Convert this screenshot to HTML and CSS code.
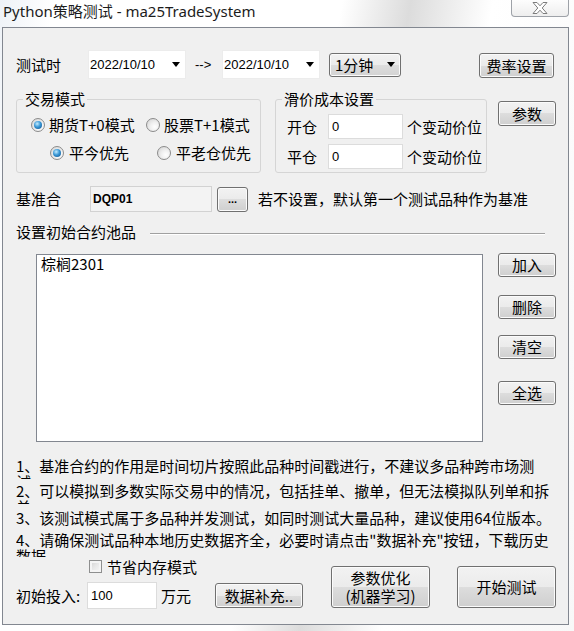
FILE: index.html
```html
<!DOCTYPE html>
<html>
<head>
<meta charset="utf-8">
<link rel="stylesheet" href="styles.css">
</head>
<body>
<div class="titlebar">
  <span class="title">Python策略测试 - ma25TradeSystem</span>
  <div class="close">
    <svg width="16" height="12" viewBox="0 0 16 12"><polygon points="1,0.5 5,0.5 8,3.8 11,0.5 15,0.5 10.2,6 15,11.5 11,11.5 8,8.2 5,11.5 1,11.5 5.8,6" fill="#ffffff" stroke="#7d7d7d" stroke-width="1" stroke-linejoin="round"/></svg>
  </div>
</div>
<div class="client">
  <div class="row r1">
    <span class="lbl l-date">测试时</span>
    <div class="date"><span>2022/10/10</span><span class="arrow"></span></div>
    <span class="to">--&gt;</span>
    <div class="date"><span>2022/10/10</span><span class="arrow"></span></div>
    <div class="combo"><span>1分钟</span><span class="arrow"></span></div>
    <button class="btn b-fee">费率设置</button>
  </div>

  <div class="row r2">
    <fieldset class="group g-mode">
      <legend>交易模式</legend>
      <div class="opt-row o1">
        <div class="opt w1"><span class="radio on"></span><span>期货T+0模式</span></div>
        <div class="opt"><span class="radio"></span><span>股票T+1模式</span></div>
      </div>
      <div class="opt-row o2">
        <div class="opt w2"><span class="radio on"></span><span>平今优先</span></div>
        <div class="opt"><span class="radio"></span><span>平老仓优先</span></div>
      </div>
    </fieldset>
    <fieldset class="group g-slip">
      <legend>滑价成本设置</legend>
      <div class="slip-row s1">
        <span class="slip-lbl">开仓</span>
        <div class="edit e-slip">0</div>
        <span class="unit">个变动价位</span>
      </div>
      <div class="slip-row s2">
        <span class="slip-lbl">平仓</span>
        <div class="edit e-slip">0</div>
        <span class="unit">个变动价位</span>
      </div>
    </fieldset>
    <button class="btn b-param">参数</button>
  </div>

  <div class="row r3">
    <span class="lbl l-base">基准合</span>
    <div class="edit e-base">DQP01</div>
    <button class="btn b-dots">...</button>
    <span class="hint">若不设置，默认第一个测试品种作为基准</span>
  </div>

  <div class="row r4">
    <span class="lbl">设置初始合约池品</span>
    <div class="sep"></div>
  </div>

  <div class="row r5">
    <div class="list"><div class="item">棕榈2301</div></div>
    <div class="btncol">
      <button class="btn b-side">加入</button>
      <button class="btn b-side m2">删除</button>
      <button class="btn b-side m3">清空</button>
      <button class="btn b-side m4">全选</button>
    </div>
  </div>

  <div class="notes">
    <div class="note n1">1、基准合约的作用是时间切片按照此品种时间戳进行，不建议多品种跨市场测试。</div>
    <div class="note n2">2、可以模拟到多数实际交易中的情况，包括挂单、撤单，但无法模拟队列单和拆单。</div>
    <div class="note n3">3、该测试模式属于多品种并发测试，如同时测试大量品种，建议使用64位版本。</div>
    <div class="note n4">4、请确保测试品种本地历史数据齐全，必要时请点击"数据补充"按钮，下载历史数据</div>
  </div>

  <div class="bottom">
    <div class="bleft">
      <div class="chk-row"><span class="chk"></span><span>节省内存模式</span></div>
      <div class="in-row">
        <span class="lbl l-init">初始投入:</span>
        <div class="edit e-init">100</div>
        <span class="wan">万元</span>
        <button class="btn b-data">数据补充..</button>
      </div>
    </div>
    <button class="btn big big1">参数优化<br>(机器学习)</button>
    <button class="btn big big2">开始测试</button>
  </div>
</div>
</body>
</html>
```

FILE: styles.css
```css
* { box-sizing: border-box; }
html, body { margin: 0; padding: 0; }
body {
  width: 574px;
  height: 631px;
  overflow: hidden;
  background:
    linear-gradient(100deg, #eef2f7 0%, #ffffff 8%, #ffffff 50%, #dcdcdc 60%, #ffffff 72%, #f8f8f8 100%);
  font-family: "Noto Sans CJK SC", sans-serif;
  font-size: 15px;
  color: #000;
}

.titlebar {
  height: 27px;
  display: flex;
  align-items: flex-start;
}
.title {
  margin: 1px 0 0 3px;
  font-family: "Noto Sans", "Noto Sans CJK SC", sans-serif;
  font-size: 15px;
  line-height: 20px;
  color: #1c1c1c;
}
.close {
  margin-left: auto;
  margin-right: 5px;
  width: 58px;
  height: 17px;
  border: 1px solid #9ea2a8;
  border-top: none;
  border-radius: 0 0 4px 4px;
  background: linear-gradient(#fdfdfd, #eeeeee);
  display: flex;
  justify-content: center;
  align-items: center;
  padding-bottom: 1px;
}

.client {
  margin-left: 2px;
  width: 567px;
  height: 598px;
  border: 1px solid #828790;
  background: #f0f0f0;
}

.row { display: flex; }
.lbl { line-height: 18px; white-space: nowrap; }

/* row 1 */
.r1 { align-items: center; height: 29px; margin-top: 22px; }
.l-date { margin-left: 13px; width: 72px; }
.date {
  width: 98px;
  height: 29px;
  background: #fff;
  border: 1px solid #ececec;
  display: flex;
  align-items: center;
  padding-left: 1px;
  font-family: "Liberation Sans", sans-serif;
  font-size: 13px;
}
.arrow {
  margin-left: auto;
  margin-right: 5px;
  width: 0;
  height: 0;
  border-left: 4px solid transparent;
  border-right: 4px solid transparent;
  border-top: 5px solid #000;
}
.to {
  width: 36px;
  padding-left: 9px;
  font-family: "Liberation Sans", sans-serif;
  font-size: 13px;
}
.combo {
  margin-left: 9px;
  width: 72px;
  height: 24px;
  border: 1px solid #707070;
  border-radius: 3px;
  background: linear-gradient(#f2f2f2 0%, #ebebeb 50%, #dddddd 50%, #d3d3d3 100%);
  box-shadow: inset 0 0 0 1px #fbfbfb;
  display: flex;
  align-items: center;
  padding-left: 5px;
  line-height: 18px;
}

.btn {
  margin: 0;
  padding: 0;
  border: 1px solid #707070;
  border-radius: 3px;
  background: linear-gradient(#f2f2f2 0%, #ebebeb 50%, #dddddd 50%, #cfcfcf 100%);
  box-shadow: inset 0 0 0 1px #fbfbfb;
  font-family: "Noto Sans CJK SC", sans-serif;
  font-size: 15px;
  line-height: 18px;
  color: #000;
}
.b-fee { margin-left: auto; margin-right: 14px; width: 75px; height: 25px; margin-top: 2px; }

/* row 2 */
.r2 { align-items: flex-start; margin-top: 12px; }
.group {
  margin: 0;
  padding: 0;
  border: 1px solid #d5d5d5;
  border-radius: 3px;
  min-width: 0;
}
.group legend {
  margin-left: 6px;
  padding: 0 2px;
  height: 16px;
  line-height: 16px;
  font-size: 15px;
}
.g-mode { margin-left: 13px; width: 245px; padding-bottom: 10px; }
.opt-row { display: flex; align-items: center; height: 18px; }
.o1 { margin-top: 9px; }
.o2 { margin-top: 10px; }
.o1 .w1 { margin-left: 14px; width: 115px; }
.o2 .w2 { margin-left: 33px; width: 107px; }
.opt { display: flex; align-items: center; gap: 4px; line-height: 18px; white-space: nowrap; }
.o2 .opt { gap: 5px; }
.radio {
  position: relative;
  flex: 0 0 14px;
  width: 14px;
  height: 14px;
  border-radius: 50%;
  border: 1px solid #8b8b8b;
  background: radial-gradient(circle at 65% 65%, #ffffff 0%, #f0f0f0 40%, #cfcfcf 100%);
}
.radio.on::after {
  content: "";
  position: absolute;
  left: 2px;
  top: 2px;
  width: 8px;
  height: 8px;
  border-radius: 50%;
  background: radial-gradient(circle at 40% 35%, #c4ecff 0%, #3a98d6 45%, #0b4a85 100%);
}

.g-slip { margin-left: 14px; width: 212px; padding-bottom: 3px; }
.slip-row { display: flex; align-items: center; height: 25px; }
.s1 { margin-top: 7px; }
.s2 { margin-top: 5px; }
.slip-lbl { margin-left: 11px; width: 41px; line-height: 18px; }
.edit {
  background: #fff;
  border: 1px solid #dcdcdc;
  font-family: "Liberation Sans", sans-serif;
  font-size: 13px;
  display: flex;
  align-items: center;
  padding-left: 3px;
}
.e-slip { width: 75px; height: 25px; }
.unit { margin-left: 4px; line-height: 18px; white-space: nowrap; }
.b-param { margin-left: 11px; margin-top: 10px; width: 58px; height: 25px; }

/* row 3 */
.r3 { align-items: center; height: 26px; margin-top: 13px; }
.l-base { margin-left: 13px; width: 74px; }
.e-base {
  width: 122px;
  height: 26px;
  background: #f3f3f3;
  border-color: #d2d2d2;
  padding-left: 2px;
  font-weight: bold;
  font-size: 12px;
}
.b-dots {
  margin-left: 5px;
  width: 31px;
  height: 25px;
  font-family: "Liberation Sans", sans-serif;
  font-size: 11px;
  font-weight: bold;
}
.hint { margin-left: 10px; line-height: 18px; white-space: nowrap; }

/* row 4 */
.r4 { align-items: center; height: 18px; margin-top: 11px; }
.r4 .lbl { margin-left: 13px; }
.sep {
  margin-left: 14px;
  margin-top: 4px;
  width: 395px;
  height: 2px;
  border-top: 1px solid #a0a0a0;
  border-bottom: 1px solid #ffffff;
}

/* row 5 */
.r5 { align-items: flex-start; margin-top: 12px; }
.list {
  margin-left: 33px;
  margin-top: 1px;
  width: 447px;
  height: 188px;
  background: #fff;
  border: 1px solid #828790;
  padding: 1px 4px;
}
.item { line-height: 16px; }
.btncol { margin-left: 15px; display: flex; flex-direction: column; }
.b-side { width: 58px; height: 24px; }
.m2 { margin-top: 18px; }
.m3 { margin-top: 16px; }
.m4 { margin-top: 22px; }

/* notes */
.notes { margin-top: 16px; margin-left: 13px; width: 542px; }
.note { height: 21px; overflow: hidden; line-height: 16px; }
.n2 { margin-top: 4px; }
.n3 { margin-top: 6px; }
.n4 { margin-top: 1px; height: 25px; }

/* bottom */
.bottom { display: flex; align-items: flex-start; }
.bleft { width: 300px; display: flex; flex-direction: column; }
.chk-row {
  margin-top: 3px;
  margin-left: 86px;
  height: 13px;
  display: flex;
  align-items: center;
  gap: 5px;
  line-height: 18px;
}
.chk {
  width: 13px;
  height: 13px;
  border: 1px solid #8e8f8f;
  background: linear-gradient(135deg, #cfcfcf 0%, #e8e8e8 50%, #f8f8f8 100%);
  box-shadow: inset 0 0 0 2px #f4f4f4;
}
.in-row { margin-top: 9px; height: 27px; display: flex; align-items: center; }
.l-init { margin-left: 13px; width: 71px; }
.e-init { width: 70px; height: 27px; }
.wan { margin-left: 4px; width: 30px; line-height: 18px; white-space: nowrap; }
.b-data { margin-left: 24px; width: 88px; height: 25px; }
.big { margin-top: 9px; width: 99px; height: 42px; }
.big1 { margin-left: 28px; }
.big2 { margin-left: 27px; }
```
